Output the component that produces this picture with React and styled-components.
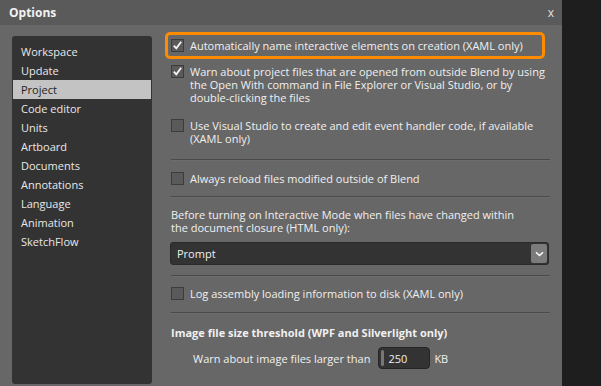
import React from "react";
import styled, { createGlobalStyle } from "styled-components";

const GlobalStyle = createGlobalStyle`
  html, body { margin: 0; padding: 0; }
  body {
    background: #1e1e1e;
    font-family: "Open Sans", "Noto Sans", sans-serif;
    font-size: 11px;
    color: #f0f0f0;
  }
`;

const Page = styled.div`
  display: flex;
  height: 386px;
  overflow: hidden;
`;

const Dialog = styled.div`
  width: 562px;
  height: 386px;
  background: #676767;
  display: flex;
  flex-direction: column;
`;

const TitleBar = styled.div`
  height: 25px;
  flex: none;
  background: #5a5a5a;
  display: flex;
  align-items: center;
  justify-content: space-between;
  padding: 0 9px 0 9px;
`;

const Title = styled.span`
  font-weight: 700;
  font-size: 12px;
  color: #f2f2f2;
`;

const Close = styled.span`
  font-size: 12px;
  color: #e0e0e0;
  margin-right: -1px;
`;

const Body = styled.div`
  flex: 1;
  display: flex;
  gap: 13px;
  padding: 7px 12px 2px 12px;
  min-height: 0;
`;

const Sidebar = styled.ul`
  list-style: none;
  margin: 4px 0 0 0;
  width: 140px;
  box-sizing: border-box;
  padding: 6px 1px;
  background: #333333;
  border-radius: 3px;
`;

const NavItem = styled.li`
  height: 19px;
  line-height: 19px;
  padding-left: 8px;
  color: ${(p) => (p.$active ? "#1e1e1e" : "#e8e8e8")};
  background: ${(p) => (p.$active ? "#c3c3c3" : "transparent")};
`;

const Content = styled.div`
  width: 385px;
  display: flex;
  flex-direction: column;
`;

const Highlight = styled.div`
  width: 380px;
  height: 27px;
  box-sizing: border-box;
  border: 3px solid #ff8c00;
  border-radius: 5px;
  display: flex;
  align-items: center;
  padding-left: 3px;
`;

const CheckRow = styled.div`
  display: flex;
  align-items: ${(p) => (p.$multi ? "flex-start" : "center")};
  gap: 6px;
  padding-left: ${(p) => (p.$inset ? 0 : 6)}px;
  margin-top: ${(p) => p.$mt || 0}px;
  line-height: 13px;
`;

const Box = styled.span`
  flex: none;
  width: 13px;
  height: 13px;
  box-sizing: border-box;
  border: 1px solid #3c3c3c;
  background: #5a5a5a;
  display: flex;
  align-items: center;
  justify-content: center;
`;

const Label = styled.span`
  color: #f0f0f0;
`;

const Separator = styled.div`
  height: 1px;
  margin-left: 6px;
  width: 379px;
  background: #4a4a4a;
  border-bottom: 1px solid #6d6d6d;
  margin-top: ${(p) => p.$mt}px;
`;

const Para = styled.div`
  padding-left: 6px;
  line-height: 13px;
  margin-top: ${(p) => p.$mt}px;
`;

const Select = styled.div`
  margin-top: 8px;
  margin-left: 5px;
  width: 379px;
  height: 23px;
  box-sizing: border-box;
  background: #333333;
  border: 1px solid #2a2a2a;
  border-radius: 3px;
  display: flex;
  align-items: center;
  justify-content: space-between;
  padding: 0 1px 0 6px;
`;

const SelectButton = styled.span`
  width: 16px;
  height: 19px;
  background: #7b7b7b;
  border-radius: 2px;
  display: flex;
  align-items: center;
  justify-content: center;
`;

const Heading = styled.div`
  padding-left: 6px;
  font-weight: 700;
  line-height: 13px;
  margin-top: 12px;
`;

const SizeRow = styled.div`
  display: flex;
  align-items: center;
  margin-top: 8px;
  padding-left: 28px;
`;

const NumberBox = styled.div`
  width: 52px;
  height: 22px;
  box-sizing: border-box;
  margin: 0 4px 0 8px;
  background: #333333;
  border: 1px solid #252525;
  border-radius: 4px;
  display: flex;
  align-items: center;
  gap: 4px;
  padding-left: 2px;
`;

const Grip = styled.span`
  width: 3px;
  height: 16px;
  background: #777;
  border-radius: 2px;
`;

const Check = () => (
  <svg width="11" height="11" viewBox="0 0 11 11">
    <path d="M1.8 5.6 L4.3 8.4 L9.2 1.8" fill="none" stroke="#f4f4f4" strokeWidth="1.8" />
  </svg>
);

const Chevron = () => (
  <svg width="9" height="6" viewBox="0 0 9 6">
    <path d="M1 1.2 L4.5 4.5 L8 1.2" fill="none" stroke="#fff" strokeWidth="1.5" />
  </svg>
);

const navItems = [
  "Workspace",
  "Update",
  "Project",
  "Code editor",
  "Units",
  "Artboard",
  "Documents",
  "Annotations",
  "Language",
  "Animation",
  "SketchFlow",
];

export default function App() {
  return (
    <Page>
      <GlobalStyle />
      <Dialog>
        <TitleBar>
          <Title>Options</Title>
          <Close>x</Close>
        </TitleBar>
        <Body>
          <Sidebar>
            {navItems.map((n) => (
              <NavItem key={n} $active={n === "Project"}>
                {n}
              </NavItem>
            ))}
          </Sidebar>
          <Content>
            <Highlight>
              <CheckRow $inset>
                <Box><Check /></Box>
                <Label>Automatically name interactive elements on creation (XAML only)</Label>
              </CheckRow>
            </Highlight>
            <CheckRow $multi $mt={6}>
              <Box><Check /></Box>
              <Label>
                Warn about project files that are opened from outside Blend by using
                <br />
                the Open With command in File Explorer or Visual Studio, or by
                <br />
                double-clicking the files
              </Label>
            </CheckRow>
            <CheckRow $multi $mt={15}>
              <Box />
              <Label>
                Use Visual Studio to create and edit event handler code, if available
                <br />
                (XAML only)
              </Label>
            </CheckRow>
            <Separator $mt={14} />
            <CheckRow $mt={11}>
              <Box />
              <Label>Always reload files modified outside of Blend</Label>
            </CheckRow>
            <Separator $mt={11} />
            <Para $mt={10}>
              Before turning on Interactive Mode when files have changed within
              <br />
              the document closure (HTML only):
            </Para>
            <Select>
              <span>Prompt</span>
              <SelectButton><Chevron /></SelectButton>
            </Select>
            <Separator $mt={10} />
            <CheckRow $mt={10}>
              <Box />
              <Label>Log assembly loading information to disk (XAML only)</Label>
            </CheckRow>
            <Separator $mt={12} />
            <Heading>Image file size threshold (WPF and Silverlight only)</Heading>
            <SizeRow>
              <span>Warn about image files larger than</span>
              <NumberBox>
                <Grip />
                <span>250</span>
              </NumberBox>
              <span>KB</span>
            </SizeRow>
          </Content>
        </Body>
      </Dialog>
    </Page>
  );
}
